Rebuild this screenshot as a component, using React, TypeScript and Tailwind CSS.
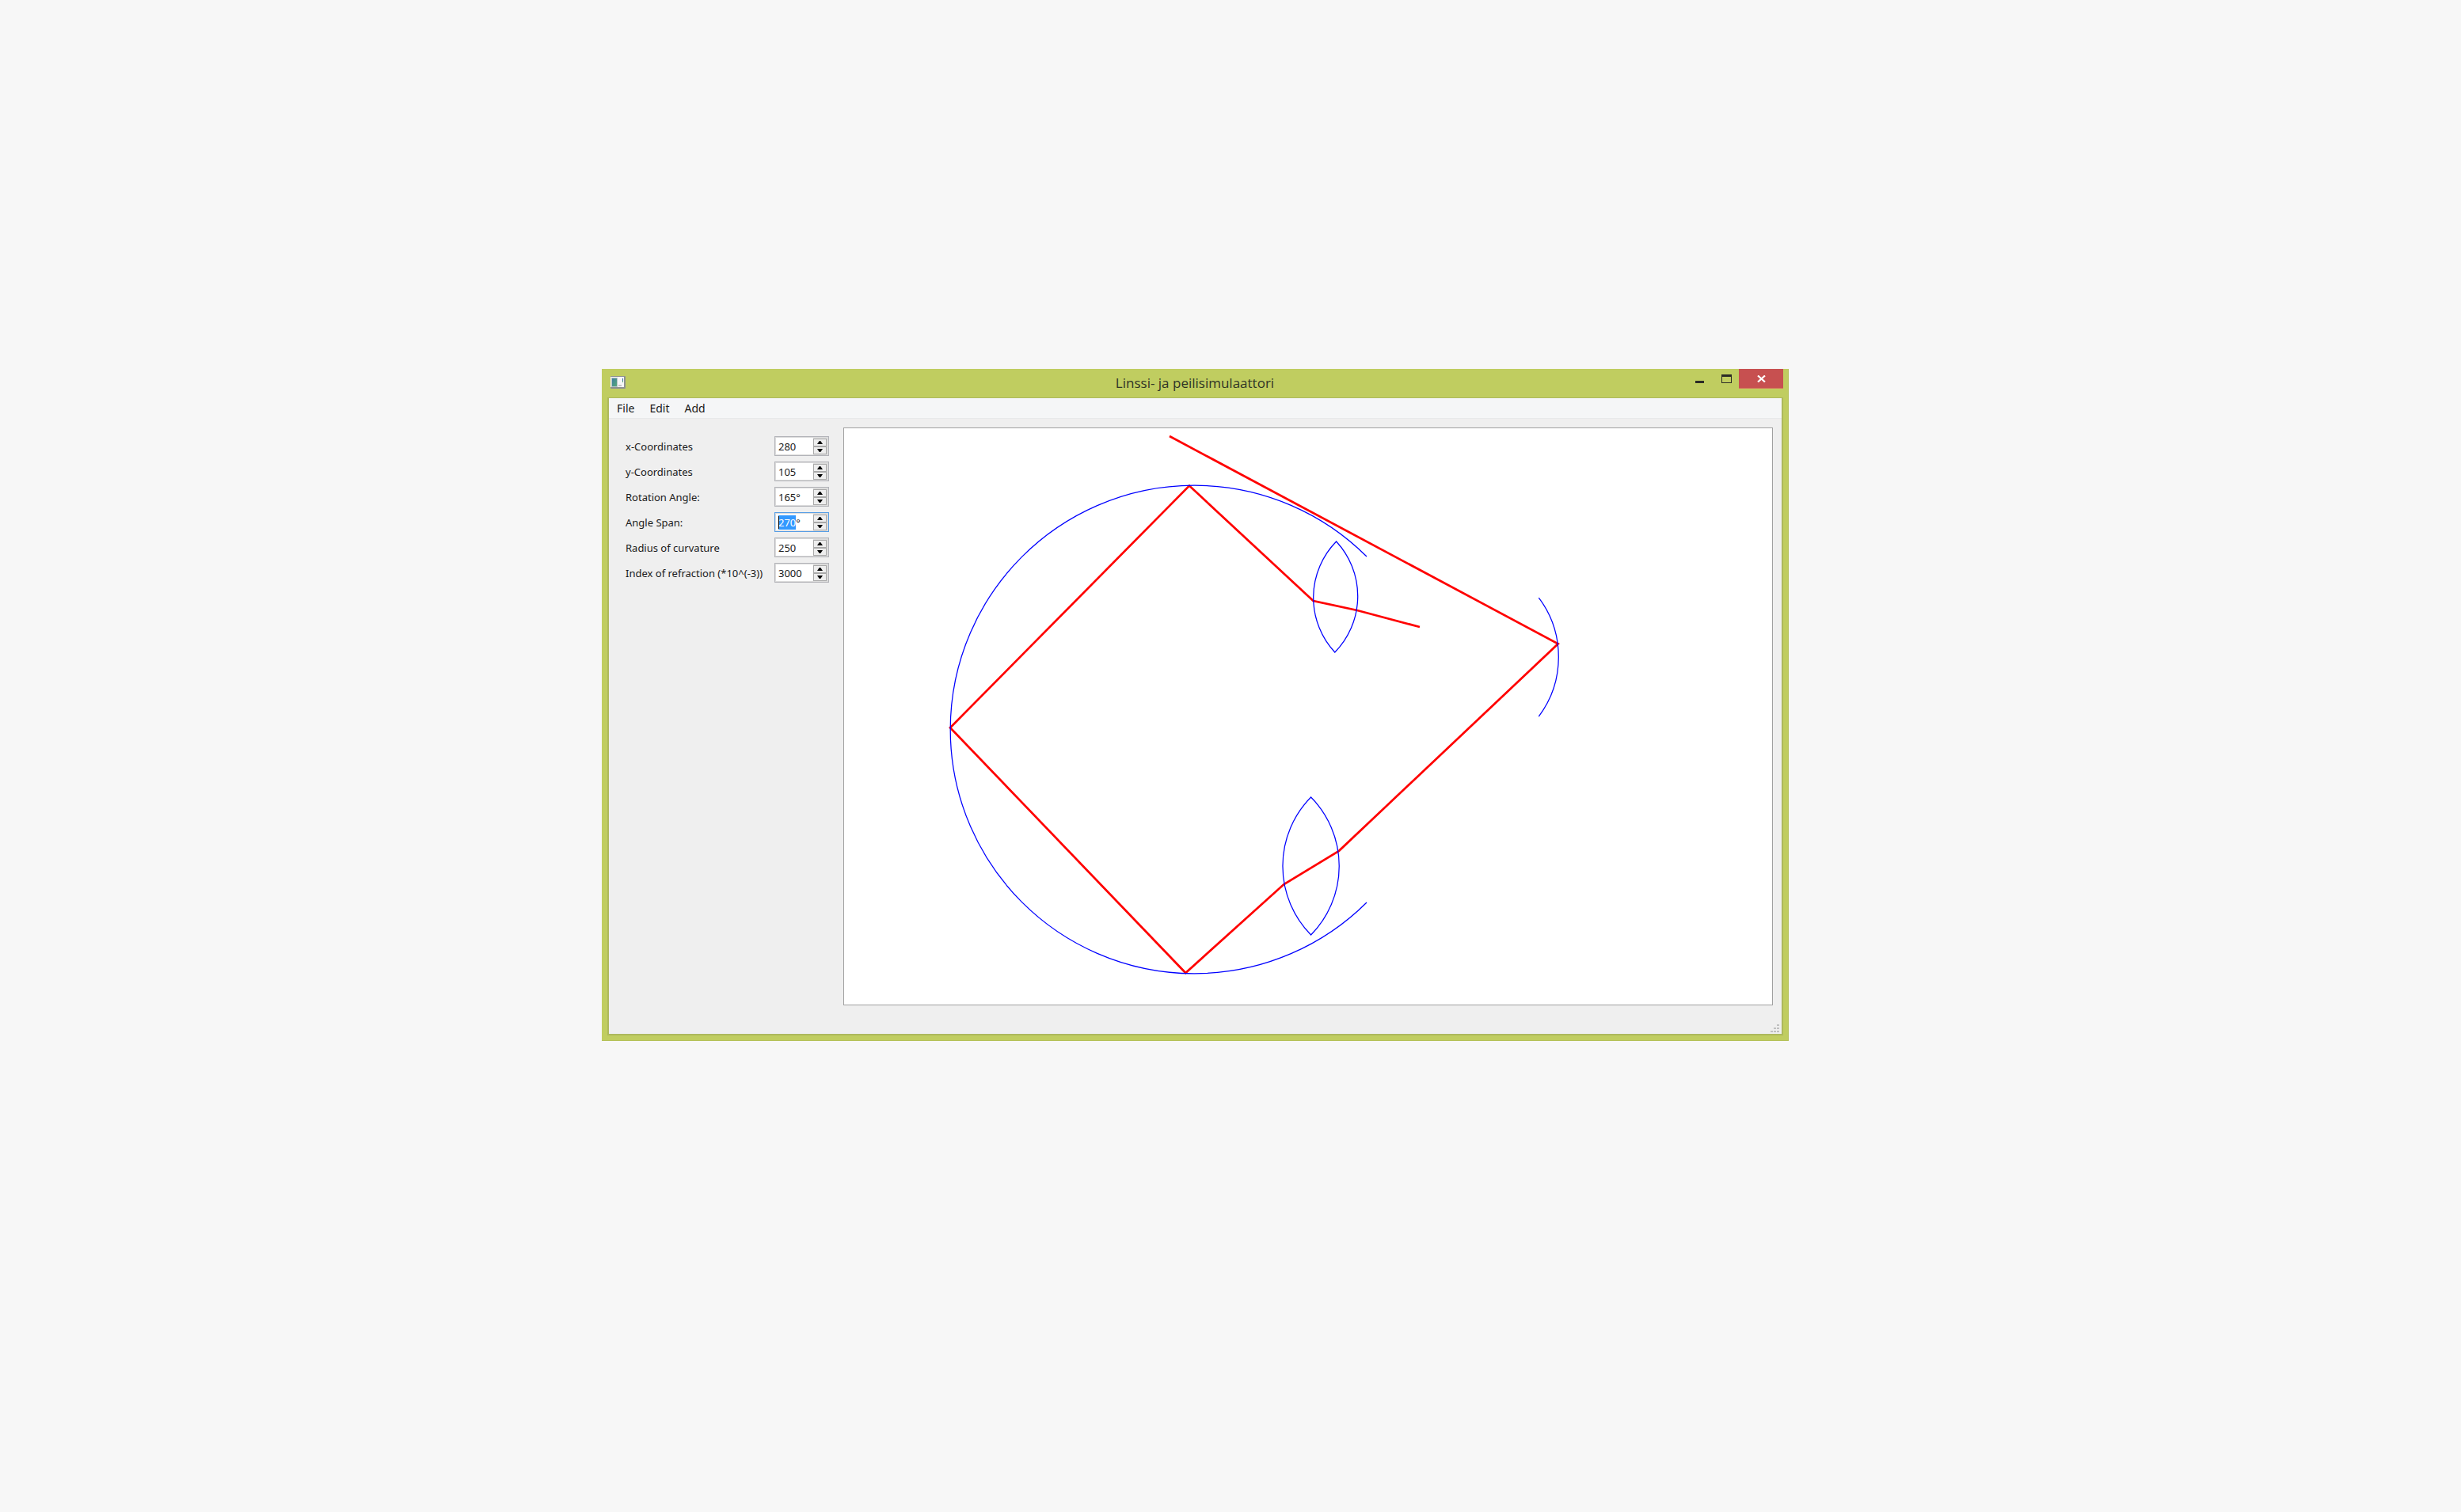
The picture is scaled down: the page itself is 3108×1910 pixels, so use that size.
import { useEffect, useRef } from "react";

type Field = { id: string; label: string; value: string; selected?: number };

const fields: Field[] = [
  { id: "x", label: "x-Coordinates", value: "280" },
  { id: "y", label: "y-Coordinates", value: "105" },
  { id: "rotation", label: "Rotation Angle:", value: "165°" },
  { id: "span", label: "Angle Span:", value: "270°", selected: 3 },
  { id: "radius", label: "Radius of curvature", value: "250" },
  { id: "refraction", label: "Index of refraction (*10^(-3))", value: "3000" },
];

function StepButton({ label, up }: { label: string; up?: boolean }) {
  return (
    <button
      type="button"
      aria-label={label}
      className="flex h-[10px] w-[17px] items-center justify-center border border-[#a9a9a9] bg-[#eeeeee]"
    >
      <svg viewBox="0 0 7 4" className="h-1 w-[7px]" aria-hidden="true">
        <path d={up ? "M0 4 L2.8 0 H4.2 L7 4 Z" : "M0 0 L2.8 4 H4.2 L7 0 Z"} fill="#000" />
      </svg>
    </button>
  );
}

function SpinBox({ field }: { field: Field }) {
  const input = useRef<HTMLInputElement>(null);
  useEffect(() => {
    if (field.selected && input.current) {
      input.current.focus();
      input.current.setSelectionRange(0, field.selected);
    }
  }, [field.selected]);
  return (
    <div
      className={
        "relative flex h-[25px] w-[69px] shrink-0 border bg-[#dcdcdc] p-px " +
        (field.selected ? "border-[#569de5]" : "border-[#b2b3b8]")
      }
    >
      <input
        ref={input}
        id={field.id}
        type="text"
        defaultValue={field.value}
        className="h-full min-w-0 flex-1 bg-white pt-px pl-[3px] text-[13px] leading-4 text-[#1a1a1a] outline-none selection:bg-[#3399ff] selection:text-white"
      />
      {field.selected && <span className="absolute top-1 left-1 h-4 w-px bg-black" />}
      <div className="flex flex-col items-center justify-center pr-px">
        <StepButton label={"Increase " + field.label} up />
        <StepButton label={"Decrease " + field.label} />
      </div>
    </div>
  );
}

function AppIcon() {
  return (
    <svg viewBox="0 0 19 16" className="h-4 w-[19px]" aria-hidden="true">
      <defs>
        <linearGradient id="pane" x1="0" y1="0" x2="1" y2="1">
          <stop offset="0" stopColor="#3f7fa0" />
          <stop offset="1" stopColor="#56a878" />
        </linearGradient>
      </defs>
      <rect x="0" y="0" width="19" height="16" rx="1" fill="#8d9090" />
      <rect x="0" y="1" width="17" height="13" fill="#f5f6f7" />
      <rect x="1" y="2" width="8" height="12" fill="#b9c4c8" />
      <rect x="2" y="3" width="6" height="10" fill="url(#pane)" />
      <rect x="10" y="11" width="4" height="2" fill="#c4c4c4" />
      <rect x="15" y="3" width="1" height="3" fill="#3c6ea8" />
      <rect x="15" y="6" width="1" height="2" fill="#56a878" />
    </svg>
  );
}

function OpticsScene() {
  return (
    <svg
      viewBox="1066 541 1172 728"
      preserveAspectRatio="xMinYMin meet"
      className="block h-[728px] w-full"
      role="img"
      aria-label="Light ray passing through lenses and mirrors"
    >
      <polyline
        fill="none"
        stroke="#ff0000"
        strokeWidth="2.7"
        points="1477,551 1967.7,813.3 1691,1074.8 1621.5,1117 1497.3,1229 1200,919.3 1502,613.6 1658.5,759 1714,771 1793,792"
      />
      <g fill="none" stroke="#0000ff" strokeWidth="1.25">
        <path d="M1726 703 A308.3 308.3 0 1 0 1726 1140" />
        <path d="M1943.3 755 A125 125 0 0 1 1943.3 905" />
        <path d="M1687.6 684 A101.5 101.5 0 0 0 1685.8 824 A101.5 101.5 0 0 0 1687.6 684 Z" />
        <path d="M1655.6 1007 A124 124 0 0 0 1655.6 1181 A124 124 0 0 0 1655.6 1007 Z" />
      </g>
    </svg>
  );
}

function TitleBar() {
  return (
    <header className="relative flex h-9 items-start justify-center">
      <div className="absolute top-[9px] left-[11px]">
        <AppIcon />
      </div>
      <h1 className="pt-[6px] font-['Open_Sans','Noto_Sans',sans-serif] text-[17px] leading-6 text-[#2f3426]">
        Linssi- ja peilisimulaattori
      </h1>
      <div className="absolute top-0 right-[6px] flex h-[25px]">
        <button type="button" aria-label="Minimize" className="flex w-9 items-center justify-center">
          <svg viewBox="0 0 11 15" className="h-[15px] w-[11px]" aria-hidden="true">
            <path d="M0 10h11v3H0z" fill="#2b2b26" />
          </svg>
        </button>
        <button type="button" aria-label="Maximize" className="flex w-8 items-center justify-center">
          <svg viewBox="0 0 13 11" className="h-[11px] w-[13px]" aria-hidden="true">
            <path d="M0 0h13v11H0zM1 3v7h11V3z" fill="#2b2b26" fillRule="evenodd" />
          </svg>
        </button>
        <button
          type="button"
          aria-label="Close"
          className="flex w-14 items-center justify-center border-b border-[#d4785a] bg-[#c75050]"
        >
          <svg viewBox="0 0 11 9" className="h-[9px] w-[11px]" aria-hidden="true">
            <path d="M1 0.5 L10 8.5 M10 0.5 L1 8.5" stroke="#fff" strokeWidth="2.2" fill="none" />
          </svg>
        </button>
      </div>
    </header>
  );
}

function SizeGrip() {
  return (
    <svg viewBox="0 0 11 10" className="h-[10px] w-[11px]" fill="#c0c0c0" aria-hidden="true">
      <path d="M8 0h3v2H8zM4 4h3v2H4zM8 4h3v2H8zM0 8h3v2H0zM4 8h3v2H4zM8 8h3v2H8z" />
    </svg>
  );
}

export default function App() {
  return (
    <div className="min-h-screen bg-[#f7f7f7] pt-[466px] pr-[849px] pb-[595px] pl-[760px] font-['Noto_Sans',sans-serif]">
      <div className="border-r border-b border-[#b5c25a] bg-[#c0cd60]">
        <TitleBar />
        <div className="mr-[6px] mb-[6px] ml-[7px] border-2 border-t border-[#adb95c]">
          <nav className="flex h-[26px] items-center gap-[19px] border-b border-[#e8e9ea] bg-[#f5f6f7] pl-[10px] text-[14px] leading-5 text-[#1a1a1a]">
            <button type="button">File</button>
            <button type="button">Edit</button>
            <button type="button">Add</button>
          </nav>
          <main className="flex bg-[#efefef] pt-[11px] pr-[11px]">
            <form className="flex w-[296px] shrink-0 flex-col gap-[7px] pt-[11px] pr-[18px] pl-[21px]">
              {fields.map((field) => (
                <div key={field.id} className="flex items-center justify-between">
                  <label htmlFor={field.id} className="pt-px text-[13px] leading-5 whitespace-nowrap text-[#1a1a1a]">
                    {field.label}
                  </label>
                  <SpinBox field={field} />
                </div>
              ))}
            </form>
            <section className="min-w-0 flex-1 border border-[#a0a0a0] bg-white">
              <OpticsScene />
            </section>
          </main>
          <footer className="flex h-9 items-end justify-end bg-[#efefef] pr-[3px] pb-[2px]">
            <SizeGrip />
          </footer>
        </div>
      </div>
    </div>
  );
}
